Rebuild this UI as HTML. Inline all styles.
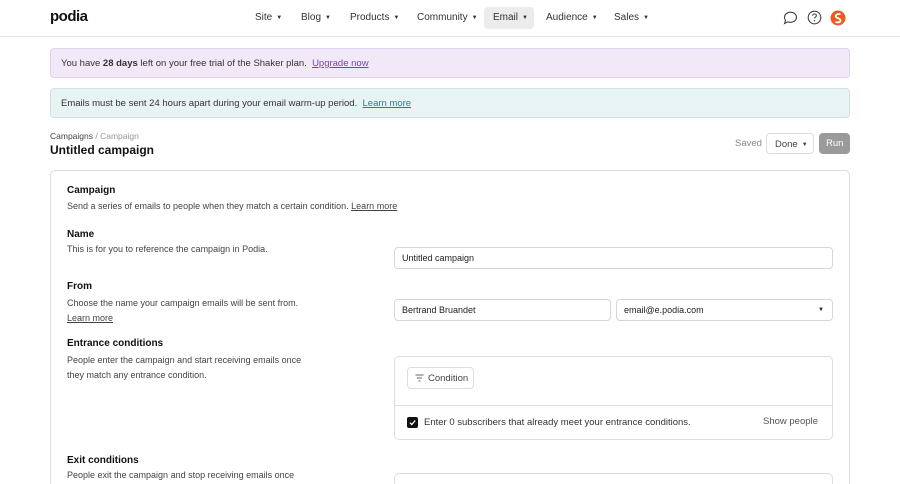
<!DOCTYPE html>
<html><head><style>
*{box-sizing:border-box;margin:0;padding:0}
html,body{width:900px;height:484px;overflow:hidden}
body{background:#fff;font-family:"Liberation Sans",sans-serif;color:#222;font-size:9.5px;position:relative}
.a{position:absolute}
.nav>span{position:absolute;top:12px;font-size:10px;color:#333;white-space:nowrap}
.car{font-size:6px;margin-left:4px;vertical-align:1px}
.lbl{font-weight:bold;font-size:10px;color:#111}
.d{color:#444;font-size:9px}
.inp{position:absolute;border:1px solid #d6d6d6;border-radius:4px;height:22px;padding:5px 7px;font-size:9px;color:#222}
a{color:#444;text-decoration:underline}
</style></head><body>
<div class="a" style="left:50px;top:8px;font-size:15px;font-weight:bold;letter-spacing:-0.5px;color:#111">podia</div>
<div class="nav">
<span style="left:255px">Site<span class="car">▼</span></span>
<span style="left:301px">Blog<span class="car">▼</span></span>
<span style="left:350px">Products<span class="car">▼</span></span>
<span style="left:417px">Community<span class="car">▼</span></span>
<div class="a" style="left:484px;top:7px;width:50px;height:22px;background:#ececec;border-radius:4px"></div>
<span style="left:493px">Email<span class="car">▼</span></span>
<span style="left:546px">Audience<span class="car">▼</span></span>
<span style="left:614px">Sales<span class="car">▼</span></span>
</div>
<svg class="a" style="left:783px;top:11px" width="15" height="14" viewBox="0 0 15 14"><path d="M7.5 1.2C11 1.2 13.5 3.5 13.5 6.3S11 11.3 7.5 11.3c-1 0-1.9-.2-2.7-.5L1.5 12.5l1-3C1.8 8.6 1.5 7.5 1.5 6.3 1.5 3.5 4 1.2 7.5 1.2z" fill="none" stroke="#444" stroke-width="1.1"/></svg>
<svg class="a" style="left:807px;top:10px" width="15" height="15" viewBox="0 0 15 15"><circle cx="7.5" cy="7.5" r="6.3" fill="none" stroke="#444" stroke-width="1.1"/><path d="M5.6 5.8c0-1.1.9-1.8 1.9-1.8s1.9.7 1.9 1.7c0 1.3-1.9 1.4-1.9 2.8" fill="none" stroke="#444" stroke-width="1.1"/><circle cx="7.5" cy="10.7" r=".7" fill="#444"/></svg>
<svg class="a" style="left:830px;top:10px" width="16" height="16" viewBox="0 0 16 16"><circle cx="8" cy="8" r="7.5" fill="#e85d1f"/><path d="M10.5 4.2C8 3.5 5 4.8 6 6.8c1 1.8 5 1.4 4.5 4-.4 1.8-3.5 2-5 1" fill="none" stroke="#fff" stroke-width="1.8"/></svg>
<div class="a" style="left:0;top:36px;width:900px;height:1px;background:#e2e2e2"></div>

<div class="a" style="left:50px;top:48px;width:800px;height:30px;background:#f1e9f8;border:1px solid #e2d3ee;border-radius:4px;padding:9px 10px;font-size:9.5px;color:#333">You have <b>28 days</b> left on your free trial of the Shaker plan. &nbsp;<a style="color:#7a3fb0">Upgrade now</a></div>
<div class="a" style="left:50px;top:88px;width:800px;height:30px;background:#e8f3f4;border:1px solid #cfe3e5;border-radius:4px;padding:9px 10px;font-size:9.5px;color:#333">Emails must be sent 24 hours apart during your email warm-up period. &nbsp;<a style="color:#2d7f8c">Learn more</a></div>

<div class="a" style="left:50px;top:131px;font-size:8.5px;color:#444">Campaigns <span style="color:#999">/ Campaign</span></div>
<div class="a" style="left:50px;top:143px;font-size:12px;font-weight:bold;color:#111">Untitled campaign</div>
<div class="a" style="left:735px;top:138px;font-size:9.5px;color:#888">Saved</div>
<div class="a" style="left:766px;top:133px;width:48px;height:21px;border:1px solid #ddd;border-radius:4px;font-size:9.5px;color:#444;padding:5px 8px;white-space:nowrap">Done<span class="car">▼</span></div>
<div class="a" style="left:819px;top:133px;width:31px;height:21px;background:#9a9a9a;border-radius:4px;font-size:9.5px;color:#fff;padding:5px 7px">Run</div>

<div class="a" style="left:50px;top:170px;width:800px;height:320px;border:1px solid #ddd;border-radius:5px"></div>
<div class="a lbl" style="left:67px;top:185px">Campaign</div>
<div class="a d" style="left:67px;top:201px">Send a series of emails to people when they match a certain condition. <a>Learn more</a></div>
<div class="a lbl" style="left:67px;top:229px">Name</div>
<div class="a d" style="left:67px;top:244px">This is for you to reference the campaign in Podia.</div>
<div class="inp" style="left:394px;top:247px;width:439px">Untitled campaign</div>
<div class="a lbl" style="left:67px;top:281px">From</div>
<div class="a d" style="left:67px;top:296px;line-height:15px">Choose the name your campaign emails will be sent from.<br><a>Learn more</a></div>
<div class="inp" style="left:394px;top:299px;width:217px">Bertrand Bruandet</div>
<div class="inp" style="left:616px;top:299px;width:217px">email@e.podia.com<span style="position:absolute;right:8px;top:7px;font-size:6px">▼</span></div>
<div class="a lbl" style="left:67px;top:338px">Entrance conditions</div>
<div class="a d" style="left:67px;top:353px;line-height:15px">People enter the campaign and start receiving emails once<br>they match any entrance condition.</div>
<div class="a" style="left:394px;top:356px;width:439px;height:84px;border:1px solid #ddd;border-radius:5px"></div>
<div class="a" style="left:395px;top:405px;width:437px;height:1px;background:#e2e2e2"></div>
<div class="a" style="left:407px;top:367px;width:67px;height:22px;border:1px solid #ddd;border-radius:4px;font-size:9.5px;color:#444;padding:5px 0 0 20px">Condition</div>
<svg class="a" style="left:415px;top:374px" width="9" height="8" viewBox="0 0 9 8"><path d="M0.5 1h8M2 4h5M3.5 7h2" stroke="#666" stroke-width="1"/></svg>
<div class="a" style="left:407px;top:417px;width:11px;height:11px;background:#111;border-radius:2px"></div>
<svg class="a" style="left:408px;top:418px" width="9" height="9" viewBox="0 0 9 9"><path d="M2 4.7l1.8 1.8L7.2 2.5" fill="none" stroke="#fff" stroke-width="1.3"/></svg>
<div class="a" style="left:424px;top:417px;font-size:9.5px;color:#333">Enter 0 subscribers that already meet your entrance conditions.</div>
<div class="a" style="left:763px;top:416px;font-size:9.5px;color:#555">Show people</div>
<div class="a lbl" style="left:67px;top:455px">Exit conditions</div>
<div class="a d" style="left:67px;top:470px">People exit the campaign and stop receiving emails once</div>
<div class="a" style="left:394px;top:473px;width:439px;height:16px;border:1px solid #ddd;border-bottom:none;border-radius:5px 5px 0 0"></div>
</body></html>
